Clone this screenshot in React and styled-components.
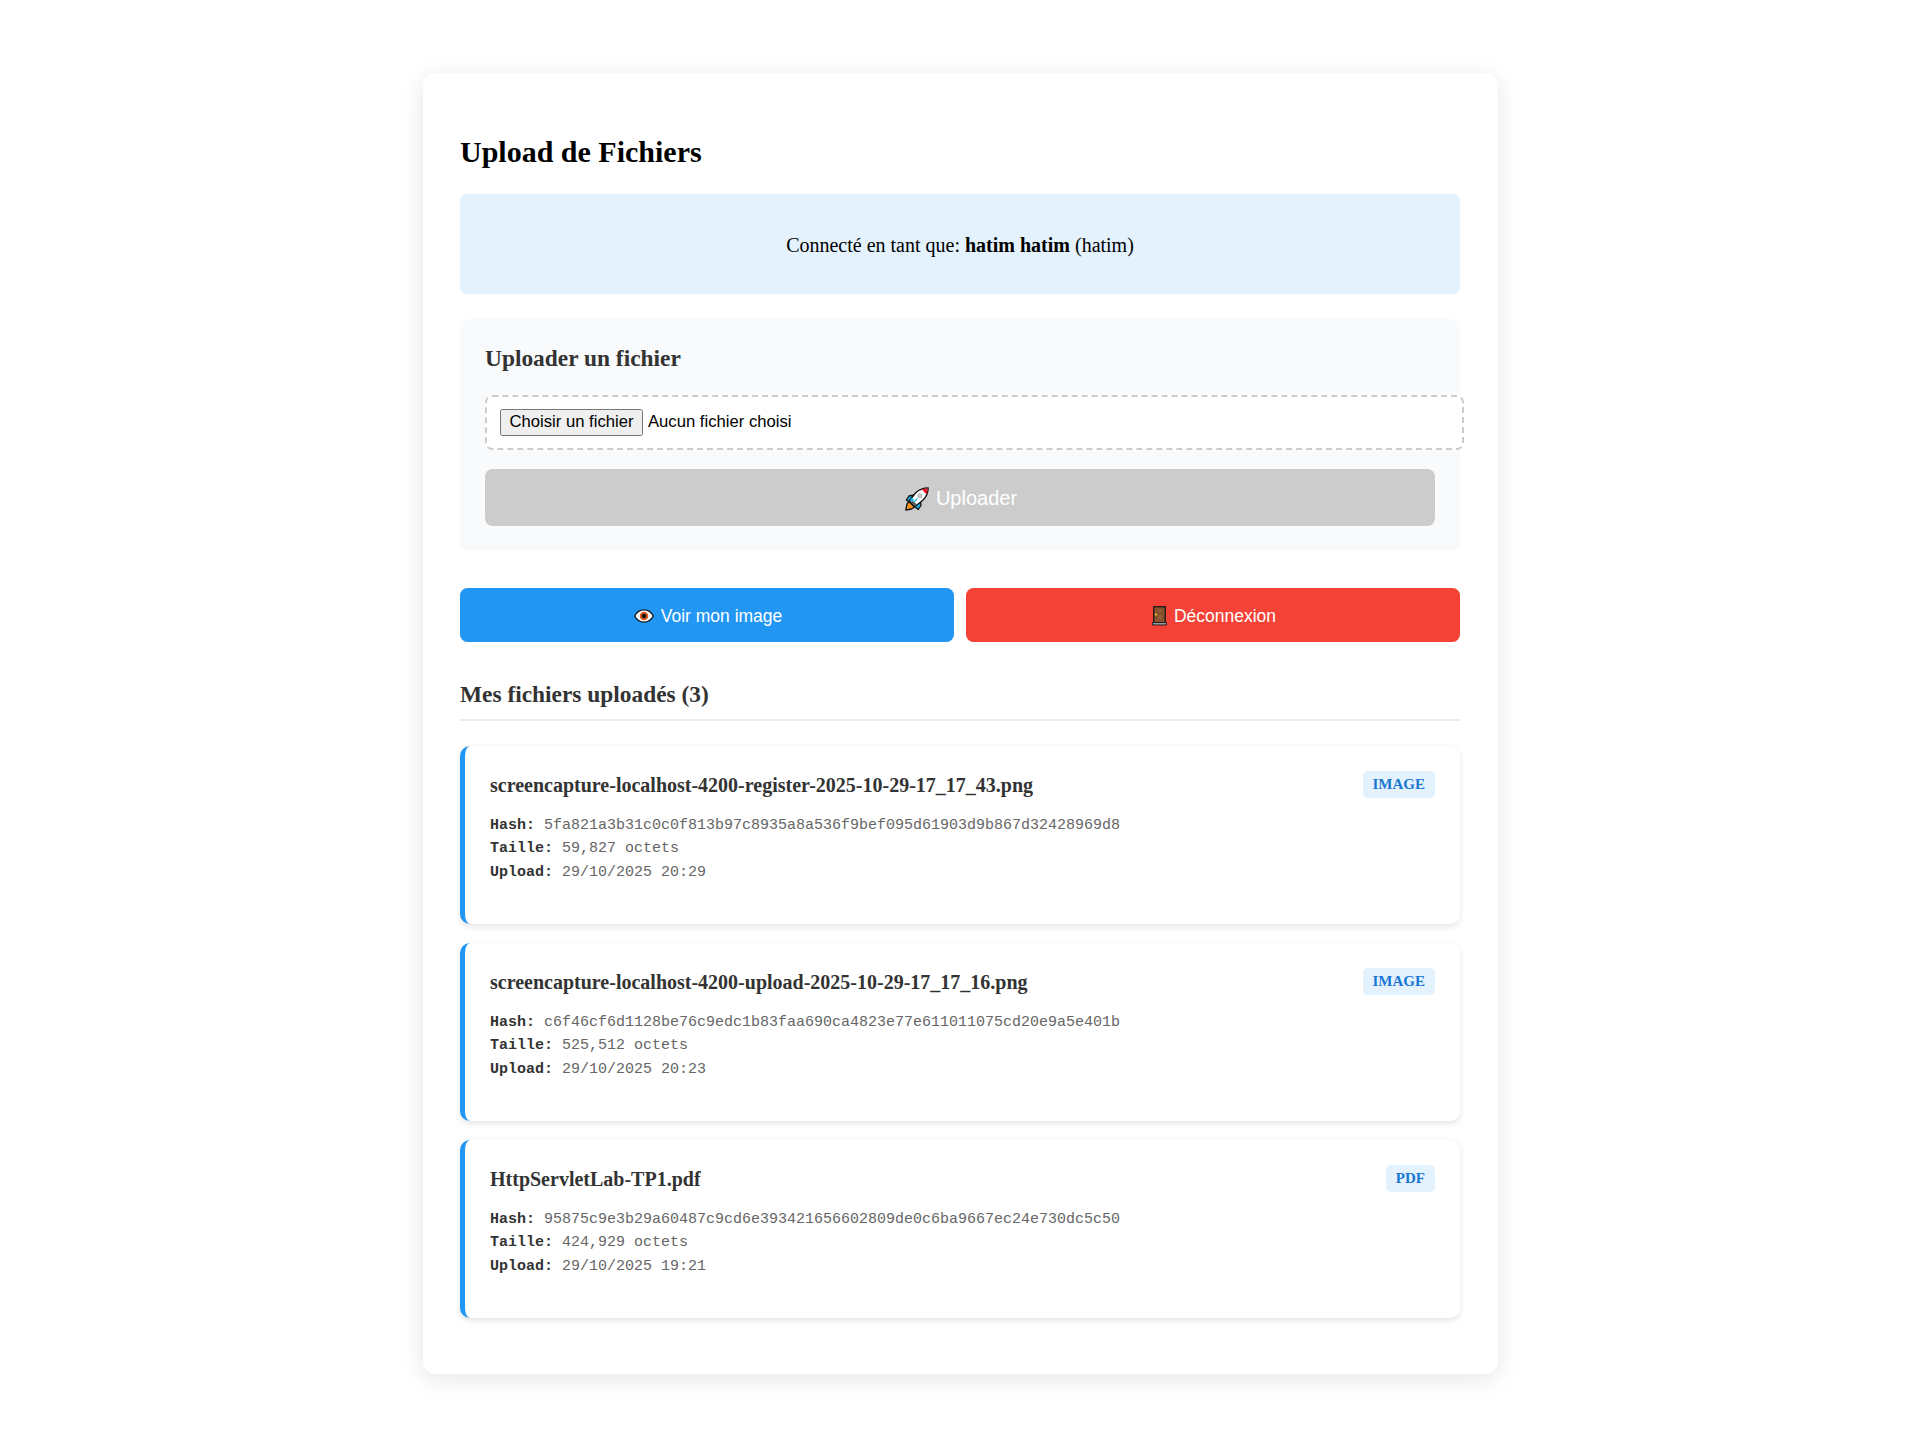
import React from 'react';
import styled, { createGlobalStyle } from 'styled-components';

const Global = createGlobalStyle`
  body { margin: 0; background: #fff; font-family: "Liberation Serif", "Times New Roman", serif; font-size: 20px; color: #000; }
`;

const Page = styled.main`
  display: flex;
  justify-content: center;
  padding: 73px 0;
`;

const Panel = styled.section`
  box-sizing: border-box;
  width: 1075px;
  height: 1301px;
  padding: 37.5px;
  background: #fff;
  border-radius: 12.5px;
  box-shadow: 0 5px 25px rgba(0, 0, 0, 0.1);
`;

const Title = styled.h2`
  margin: 24.5px 0 25px;
  font-size: 30px;
  line-height: 34px;
`;

const Banner = styled.div`
  display: flex;
  align-items: center;
  justify-content: center;
  height: 100px;
  margin-bottom: 25px;
  border-radius: 6.25px;
  background: #e3f2fd;
`;

const BannerText = styled.p`
  margin: 0;
  padding-top: 2px;
  line-height: 23px;
`;

const UploadBox = styled.div`
  box-sizing: border-box;
  height: 232px;
  padding: 25px;
  margin-bottom: 37px;
  border-radius: 7.5px;
  background: #f8fafc;
`;

const Heading = styled.h3`
  margin: 0;
  padding-top: 1px;
  color: #333;
  font-size: 23.4px;
  line-height: 26px;
`;

const FileField = styled.div`
  box-sizing: border-box;
  display: flex;
  align-items: flex-start;
  gap: 5px;
  width: 979px;
  height: 55px;
  margin: 24px 0 19px;
  padding: 12px 13px;
  border: 2px dashed #ccc;
  border-radius: 7.5px;
  background: #fff;
  font: 16.67px/23px "Liberation Sans", Arial, sans-serif;
`;

const FileButton = styled.button`
  box-sizing: border-box;
  width: 143px;
  height: 27px;
  padding: 0 0 2px;
  border: 1px solid #767676;
  border-radius: 2.5px;
  background: #efefef;
  color: #000;
  font: inherit;
`;

const FileStatus = styled.span`
  padding-top: 1px;
`;

const Button = styled.button`
  box-sizing: border-box;
  display: flex;
  align-items: center;
  justify-content: center;
  flex: 1;
  gap: ${(p) => p.$gap}px;
  width: 100%;
  height: ${(p) => p.$height}px;
  padding: 2px 0 0 2px;
  border: 0;
  border-radius: 7.5px;
  background: ${(p) => p.$color};
  color: #fff;
  font: ${(p) => p.$size}px "Liberation Sans", Arial, sans-serif;
`;

const Actions = styled.div`
  display: flex;
  gap: 12px;
  margin-bottom: 38px;
`;

const ListHeading = styled(Heading)`
  padding-bottom: 12px;
  margin-bottom: 25px;
  border-bottom: 2px solid #eee;
`;

const List = styled.div`
  display: flex;
  flex-direction: column;
  gap: 19px;
`;

const Card = styled.article`
  box-sizing: border-box;
  height: 178px;
  padding: 25px;
  border-left: 5px solid #2196f3;
  border-radius: 10px;
  background: #fff;
  box-shadow: 0 2.5px 6.25px rgba(0, 0, 0, 0.1);
`;

const CardHeader = styled.header`
  display: flex;
  align-items: center;
  justify-content: space-between;
  height: 27px;
  margin-bottom: 16px;
`;

const FileName = styled.strong`
  padding-top: 2px;
  color: #333;
  font-size: 20px;
`;

const Badge = styled.span`
  padding: 0 10px;
  border-radius: 5px;
  background: #e3f2fd;
  color: #1976d2;
  font-size: 15px;
  font-weight: bold;
  line-height: 27px;
`;

const Details = styled.div`
  color: #666;
  font: 15px/23.4px "Liberation Mono", "Courier New", monospace;
  strong { color: #333; }
`;

const Rocket = () => (
  <svg width="24" height="24" viewBox="0 0 24 24" strokeLinejoin="round">
    <path d="M9 8L4 9L1.3 13L4.5 15Z M15.5 14L16 18.5L13.2 22.5L9.5 19.5Z" fill="#19b5e8" stroke="#111" strokeWidth="1.3" />
    <path d="M4 14.5L2 17L0.8 23L6.5 22L9.5 20Z" fill="#f7941d" stroke="#111" strokeWidth="1.3" />
    <path d="M23.2 0.8Q16 0.8 11 5.5L4 14L9.8 19.8L18 13Q23.2 8 23.2 0.8Z" fill="#fff" stroke="#111" strokeWidth="1.3" />
    <path d="M16.8 2.5Q19.5 1.3 22.6 1.4Q22.6 4.6 21.4 7.2Z" fill="#e81224" />
    <path d="M4.7 14L6.3 12.2L11.8 17.5L9.8 19Z" fill="#555" />
    <path d="M5 13L7 10.8L9 12.8L7 15Z" fill="#19b5e8" />
    <path d="M9 15L12.5 11.5" stroke="#19b5e8" strokeWidth="1.2" />
    <circle cx="14.8" cy="8.8" r="2" fill="#ccc" stroke="#aaa" />
  </svg>
);

const Eye = () => (
  <svg width="20" height="14" viewBox="0 0 20 14">
    <path d="M0.7 7C5-1.2 15-1.2 19.3 7C15 15.2 5 15.2 0.7 7Z" fill="#fff" stroke="#111" strokeWidth="1.3" />
    <circle cx="10" cy="7" r="4.3" fill="#d9581d" />
    <circle cx="10" cy="7" r="2.2" fill="#111" />
  </svg>
);

const Door = () => (
  <svg width="15" height="20" viewBox="0 0 15 20">
    <path d="M1 0H14V17H1Z" fill="#2b1c19" />
    <path d="M2.5 1.5H12.5V16H2.5Z" fill="#8e562e" />
    <path d="M5 3H11V6H5Z M5 8H11V14H5Z" fill="#965e36" stroke="#70452a" strokeWidth="0.7" />
    <path d="M0.5 16.5H14.5V19H0.5Z" fill="#999" stroke="#222" />
    <circle cx="4" cy="8.5" r="1" fill="#ffd52e" />
  </svg>
);

const files = [
  { name: 'screencapture-localhost-4200-register-2025-10-29-17_17_43.png', type: 'IMAGE', hash: '5fa821a3b31c0c0f813b97c8935a8a536f9bef095d61903d9b867d32428969d8', size: '59,827', date: '29/10/2025 20:29' },
  { name: 'screencapture-localhost-4200-upload-2025-10-29-17_17_16.png', type: 'IMAGE', hash: 'c6f46cf6d1128be76c9edc1b83faa690ca4823e77e611011075cd20e9a5e401b', size: '525,512', date: '29/10/2025 20:23' },
  { name: 'HttpServletLab-TP1.pdf', type: 'PDF', hash: '95875c9e3b29a60487c9cd6e393421656602809de0c6ba9667ec24e730dc5c50', size: '424,929', date: '29/10/2025 19:21' },
];

export default function App() {
  return (
    <Page>
      <Global />
      <Panel>
        <Title>Upload de Fichiers</Title>
        <Banner><BannerText>Connecté en tant que: <strong>hatim hatim</strong> (hatim)</BannerText></Banner>
        <UploadBox>
          <Heading>Uploader un fichier</Heading>
          <FileField><FileButton>Choisir un fichier</FileButton><FileStatus>Aucun fichier choisi</FileStatus></FileField>
          <Button $height={57} $size={20} $gap={7} $color="#ccc"><Rocket />Uploader</Button>
        </UploadBox>
        <Actions>
          <Button $height={54} $size={17.5} $gap={7} $color="#2196f3"><Eye />Voir mon image</Button>
          <Button $height={54} $size={17.5} $gap={7} $color="#f44336"><Door />Déconnexion</Button>
        </Actions>
        <ListHeading>Mes fichiers uploadés (3)</ListHeading>
        <List>
          {files.map((f) => (
            <Card key={f.hash}>
              <CardHeader><FileName>{f.name}</FileName><Badge>{f.type}</Badge></CardHeader>
              <Details>
                <div><strong>Hash:</strong> {f.hash}</div>
                <div><strong>Taille:</strong> {f.size} octets</div>
                <div><strong>Upload:</strong> {f.date}</div>
              </Details>
            </Card>
          ))}
        </List>
      </Panel>
    </Page>
  );
}
